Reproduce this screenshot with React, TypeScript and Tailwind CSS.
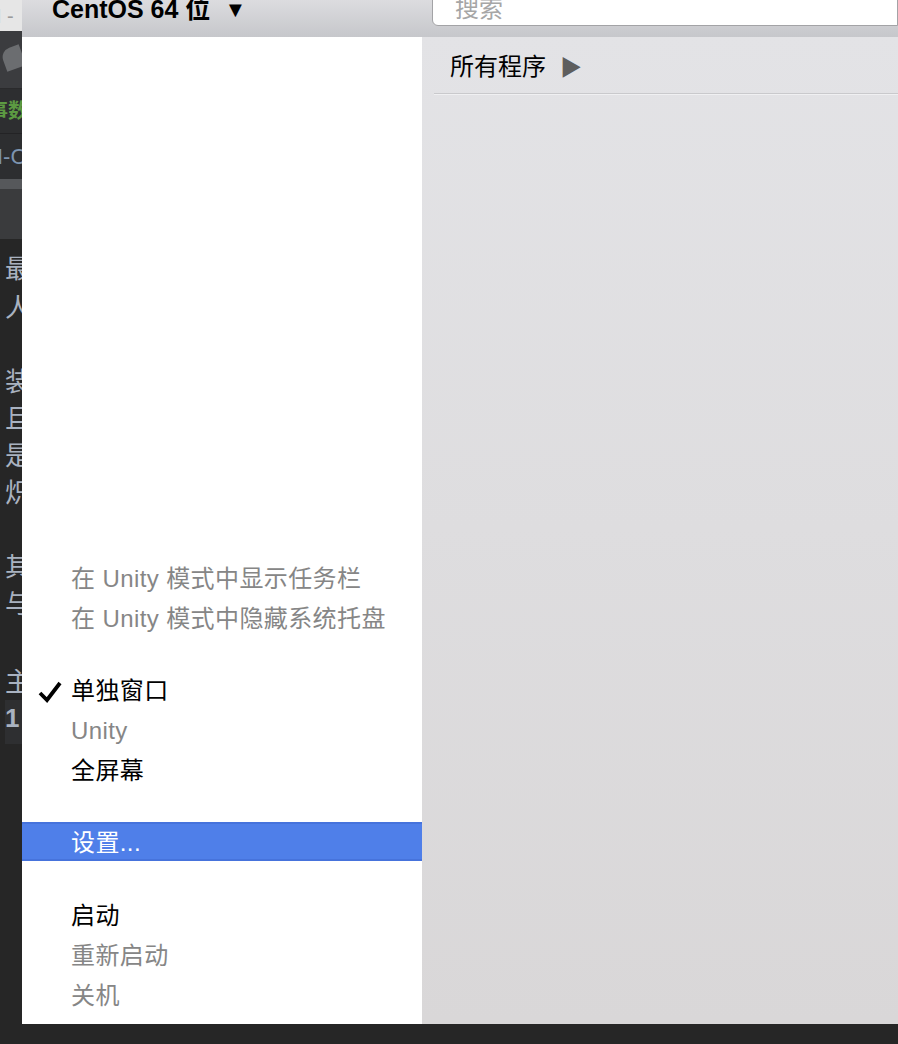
import React from "react"

const font = { fontFamily: '"Liberation Sans", "Noto Sans CJK SC", sans-serif' }

function EditorStrip() {
  // sliver of the editor window peeking out behind the VM menu
  const chars: { y: string; t: string }[] = [
    { y: "mt-[12px]", t: "最" },
    { y: "mt-[3px]", t: "人" },
    { y: "mt-[38px]", t: "装" },
    { y: "mt-[1px]", t: "且" },
    { y: "mt-[1px]", t: "是" },
    { y: "mt-[1px]", t: "炽" },
    { y: "mt-[38px]", t: "其" },
    { y: "mt-[1px]", t: "与" },
  ]
  return (
    <div className="w-[22px] shrink-0 overflow-hidden flex flex-col bg-[#262626]" style={font}>
      <div className="h-[31px] bg-[#e6e6e6] flex items-center text-[#9a9a9a] text-[20px] whitespace-nowrap">
        <span className="-ml-[4px]">I -</span>
      </div>
      <div className="h-[58px] bg-[#3b3c3f] border-b border-[#2a2a2c] relative">
        <div className="absolute left-[3px] top-[16px] w-[20px] h-[22px] bg-[#6b6d70] rounded-tl-[10px] rotate-[-20deg]" />
      </div>
      <div className="h-[45px] bg-[#2d2e30] border-b border-[#232325] flex items-center text-[#5c9a42] text-[20px] font-bold whitespace-nowrap">
        <span className="-ml-[12px]">事数</span>
      </div>
      <div className="h-[45px] bg-[#2d2e30] flex items-center text-[#7d95b0] text-[22px] whitespace-nowrap">
        <span className="-ml-[3px]">I-C</span>
      </div>
      <div className="h-[10px] bg-[#56585b]" />
      <div className="h-[50px] bg-[#3a3b3d]" />
      <div className="flex flex-col text-[#a9b2c0] text-[26px] leading-[36px] whitespace-nowrap">
        {chars.map((c, i) => (
          <span key={i} className={`${c.y} ml-[5px]`}>
            {c.t}
          </span>
        ))}
        <span className="mt-[42px] ml-[5px] h-[36px]">主</span>
        <span className="ml-[5px] h-[44px] bg-[#2e2f31] font-bold">1</span>
      </div>
    </div>
  )
}

function Item({
  children,
  muted,
  checked,
}: {
  children: React.ReactNode
  muted?: boolean
  checked?: boolean
}) {
  return (
    <div
      className={`relative h-[40px] flex items-center pl-[49px] text-[24px] tracking-[0.4px] whitespace-nowrap ${
        muted ? "text-[#868686]" : "text-black"
      }`}
    >
      {checked && (
        <svg className="absolute left-[16px] top-[10px]" width="24" height="22" viewBox="0 0 24 22">
          <path d="M2 12 L9 19 L22 2" fill="none" stroke="#000" strokeWidth="3.8" strokeLinejoin="miter" />
        </svg>
      )}
      {children}
    </div>
  )
}

export default function App() {
  return (
    <div className="w-[898px] h-[1044px] bg-[#262626] flex overflow-hidden" style={font}>
      <EditorStrip />
      <div className="flex-1 flex flex-col h-[1024px]">
        {/* title bar */}
        <div className="h-[37px] shrink-0 flex bg-gradient-to-b from-[#dcdcdf] to-[#c6c7cb]">
          <div className="w-[410px] shrink-0 flex items-start pl-[30px] -mt-[9px] text-[25px] font-bold text-black whitespace-nowrap">
            CentOS 64 位
            <span className="ml-[14px] text-[22px] mt-[2px]">▼</span>
          </div>
          <div className="flex-1 h-[27px] -mt-[1px] bg-white border border-[#a3a3a6] rounded-bl-[6px] pl-[22px] flex items-end">
            <span className="text-[24px] text-[#a6a6a6] leading-[24px] mb-[4px]">搜索</span>
          </div>
        </div>
        <div className="flex-1 flex min-h-0">
          {/* menu */}
          <div className="w-[400px] shrink-0 bg-white flex flex-col justify-end pb-[8px]">
            <Item muted>在 Unity 模式中显示任务栏</Item>
            <Item muted>在 Unity 模式中隐藏系统托盘</Item>
            <div className="h-[32px]" />
            <Item checked>单独窗口</Item>
            <Item muted>Unity</Item>
            <Item>全屏幕</Item>
            <div className="h-[31px]" />
            <div className="h-[39px] bg-[#4f7fe9] border-t-2 border-b-2 border-[#4673dc] flex items-center pl-[49px] pt-[3px] text-[24px] tracking-[0.4px] text-white">
              设置...
            </div>
            <div className="h-[35px]" />
            <Item>启动</Item>
            <Item muted>重新启动</Item>
            <Item muted>关机</Item>
          </div>
          {/* programs pane */}
          <div className="flex-1 bg-gradient-to-b from-[#e3e3e6] to-[#d9d7d8] flex flex-col pl-[12px]">
            <div className="h-[56px] flex items-center pl-[16px] pt-[4px] text-[24px] text-black">
              所有程序
              <span className="ml-[14px] text-[#5e5e5e] text-[22px]">▶</span>
            </div>
            <div className="h-[2px] bg-[#c9c9cc] border-b border-[#f0f0f2]" />
          </div>
        </div>
      </div>
    </div>
  )
}
